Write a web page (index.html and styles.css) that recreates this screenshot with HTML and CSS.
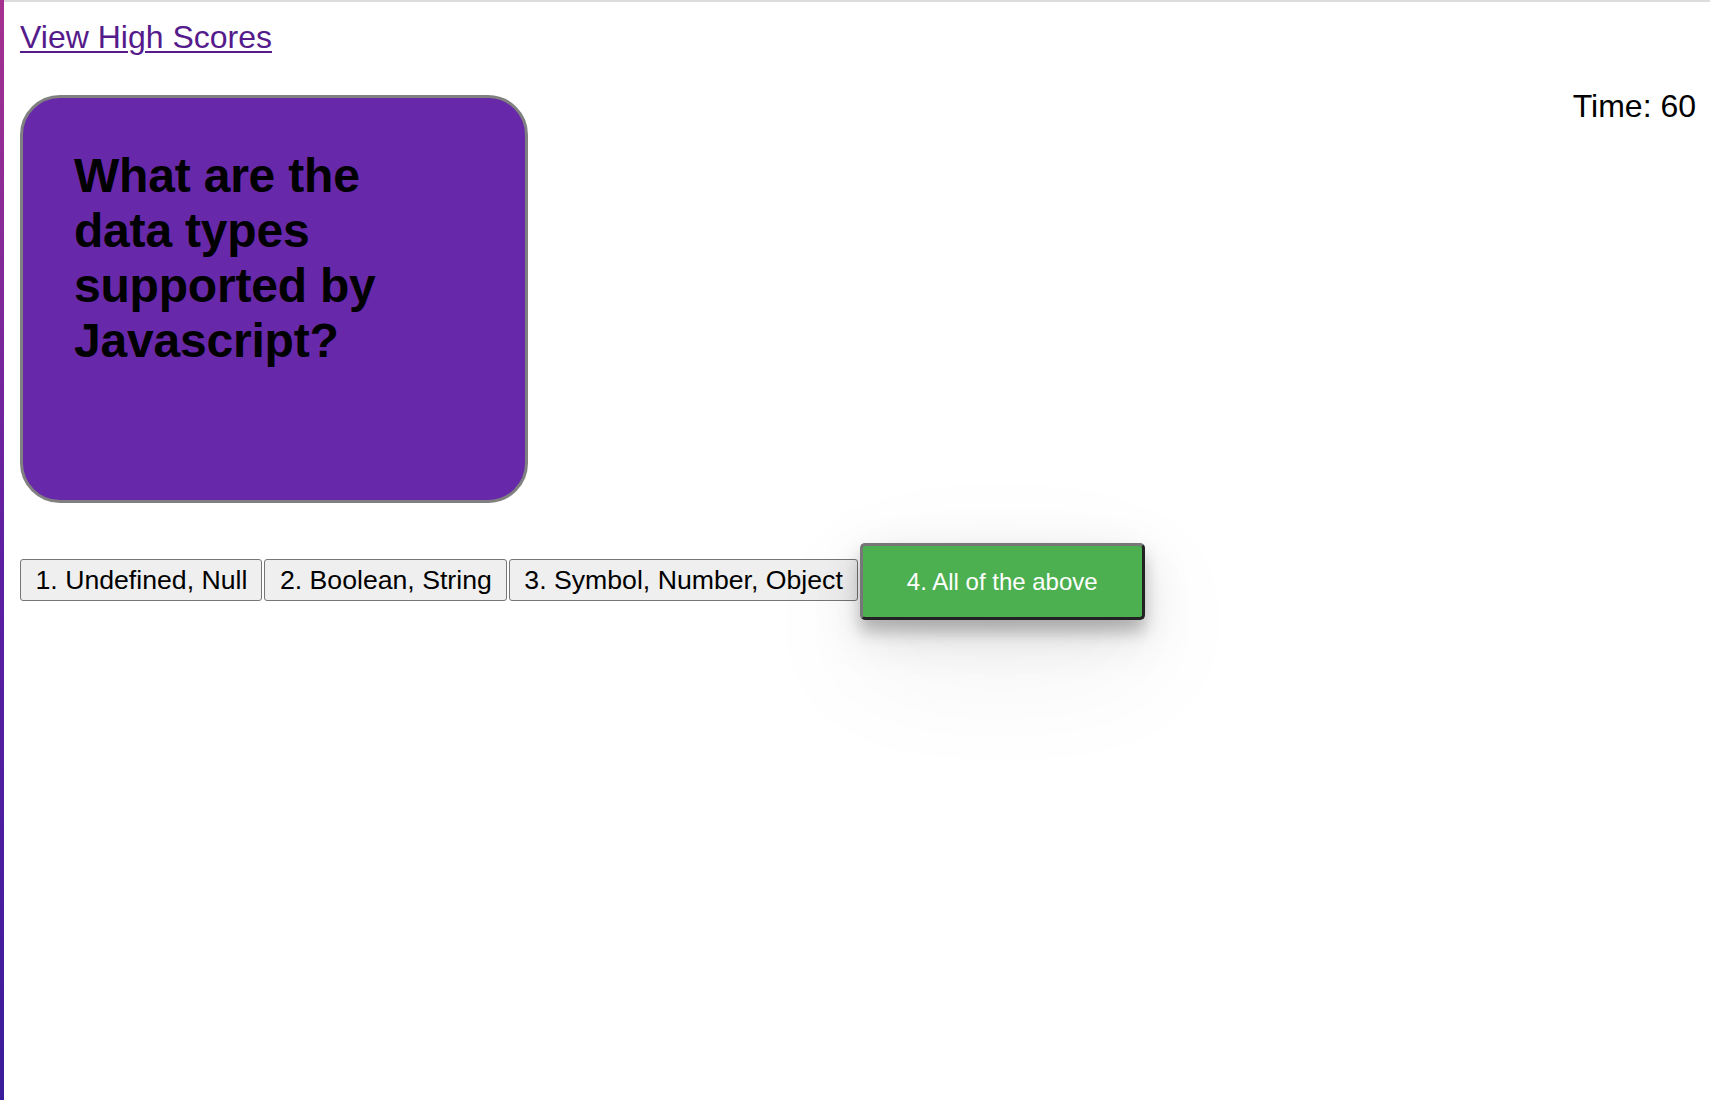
FILE: index.html
```html
<!DOCTYPE html>
<html lang="en">
<head>
<meta charset="utf-8">
<title>Code Quiz</title>
<link rel="stylesheet" href="styles.css">
</head>
<body>
<div class="page">
  <header class="topbar">
    <a class="scores-link" href="#">View High Scores</a>
  </header>
  <main class="quiz-row">
    <section class="question-card">
      <h1 class="question">What are the data types supported by Javascript?</h1>
    </section>
    <div class="timer">Time: 60</div>
  </main>
  <div class="answers">
    <button class="answer">1. Undefined, Null</button>
    <button class="answer">2. Boolean, String</button>
    <button class="answer">3. Symbol, Number, Object</button>
    <button class="answer answer-active">4. All of the above</button>
  </div>
</div>
</body>
</html>
```

FILE: styles.css
```css
html {
  background: #ffffff;
}

body {
  margin: 0;
  min-height: 1100px;
  box-sizing: border-box;
  border-left: 4px solid transparent;
  border-image: linear-gradient(to bottom, #a6318f 0%, #5e1fa2 50%, #3a1c9b 100%) 1;
  box-shadow: inset 0 2px 0 #dcdcdc;
  font-family: "Liberation Sans", Arial, Helvetica, sans-serif;
  color: #000;
}

.page {
  padding: 19px 14px 0 16px;
}

.topbar {
  display: flex;
  line-height: 36px;
}

.scores-link {
  font-size: 32px;
  color: #551a8b;
  text-decoration: underline;
  text-decoration-thickness: 2px;
  text-underline-offset: 3px;
}

.quiz-row {
  display: flex;
  justify-content: space-between;
  align-items: flex-start;
  margin-top: 33px;
}

.question-card {
  box-sizing: border-box;
  width: 508px;
  height: 408px;
  margin-top: 7px;
  padding: 50px 50px 50px 51px;
  background: #6729a9;
  border: 3px solid #808080;
  border-radius: 40px;
}

.question {
  margin: 0;
  max-width: 350px;
  font-size: 48px;
  line-height: 55px;
  font-weight: bold;
  letter-spacing: -0.2px;
  color: #000;
}

.timer {
  font-size: 32px;
  line-height: 36px;
}

.answers {
  display: flex;
  align-items: center;
  gap: 2px;
  margin-top: 40px;
}

.answer {
  font-family: "Liberation Sans", Arial, Helvetica, sans-serif;
  font-size: 26.67px;
  line-height: 30px;
  margin-bottom: 4px;
  padding: 5px 14px 5px 14.5px;
  background: #efefef;
  color: #000;
  border: 1px solid #767676;
  border-radius: 3px;
}

.answer-active {
  font-size: 24px;
  line-height: 27px;
  margin-bottom: 0;
  padding: 22px 44px;
  background: #4caf50;
  color: #ffffff;
  border: 3px solid;
  border-color: #777777 #222222 #222222 #777777;
  border-radius: 5px;
  box-shadow: 0 12px 16px 0 rgba(0, 0, 0, 0.24), 0 17px 50px 0 rgba(0, 0, 0, 0.12), 0 40px 130px 0 rgba(0, 0, 0, 0.07);
}
```
